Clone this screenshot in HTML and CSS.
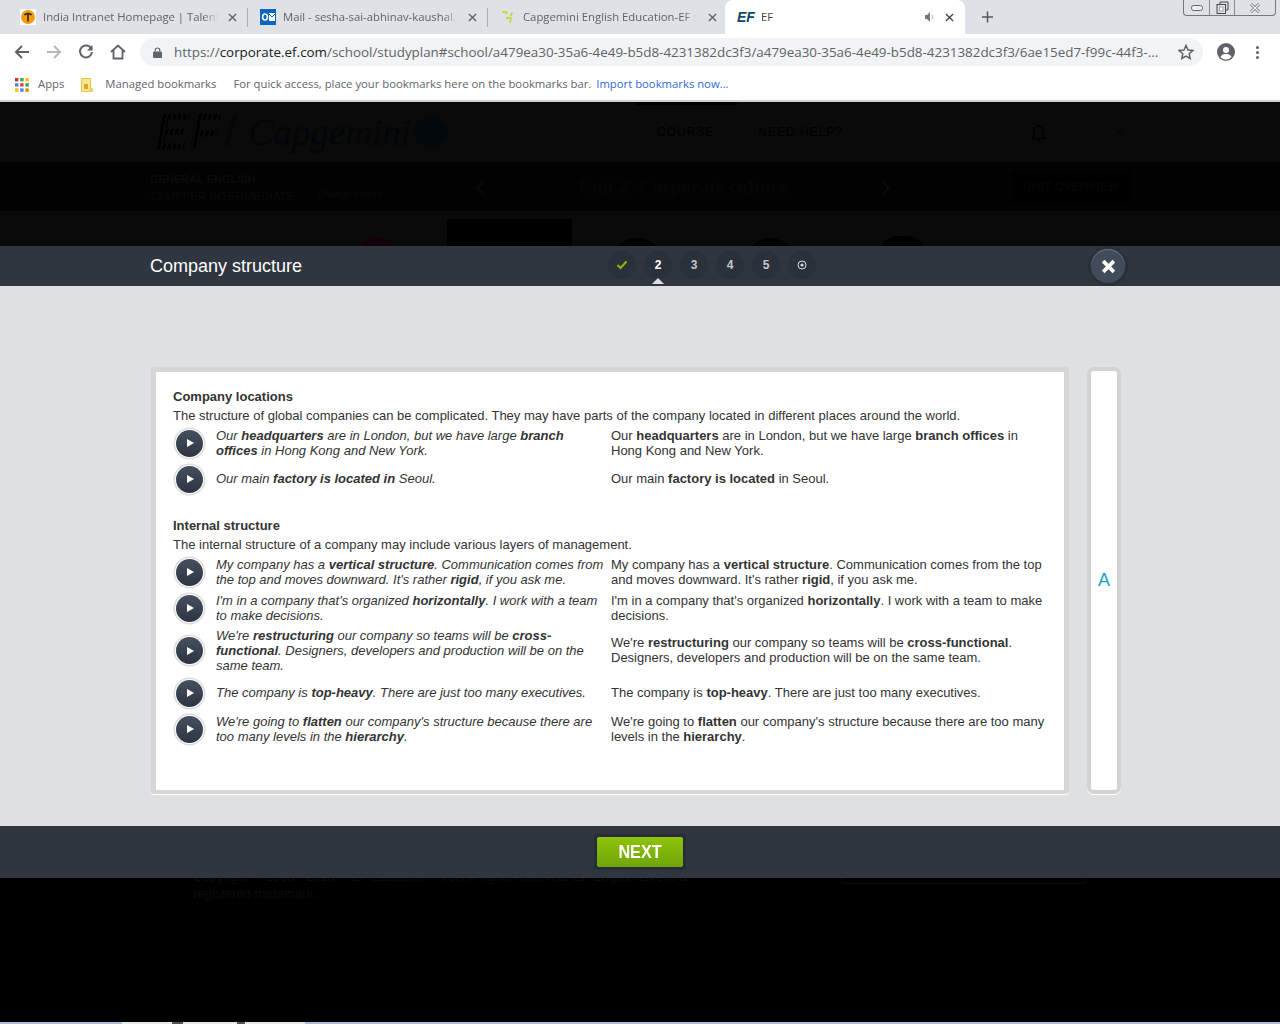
FILE: index.html

```html
<!DOCTYPE html>
<html lang="en">
<head>
    <meta charset="UTF-8">
    <title>EF</title>
    <link rel="stylesheet" href="styles.css">
</head>
<body>
    <div class="tabstrip">
        <div class="tab">
            <svg class="fav" viewBox="0 0 16 16"><rect width="16" height="16" fill="#fff"/><circle cx="8" cy="8" r="7" fill="#f59a0c"/><path d="M4.500 6a4 3 0 0 1 7 0M8 4v8.500" stroke="#222" stroke-width="1.500" fill="none"/></svg>
            <span class="tab-title">India Intranet Homepage | Talent</span>
            <svg class="tab-x" viewBox="0 0 10 10"><path d="M1 1l8 8M9 1l-8 8" stroke="#5f6368" stroke-width="1.500"/></svg>
        </div>
        <div class="tab tab-sep">
            <svg class="fav" viewBox="0 0 16 16"><rect y="0" width="16" height="16" fill="#0a64c0"/><rect x="9" y="4" width="6" height="8" fill="#fff"/><path d="M9 5l3 3 3-3" stroke="#0a64c0" fill="none"/><ellipse cx="5" cy="8" rx="2.400" ry="3" fill="none" stroke="#fff" stroke-width="1.600"/></svg>
            <span class="tab-title">Mail - sesha-sai-abhinav-kaushal.</span>
            <svg class="tab-x" viewBox="0 0 10 10"><path d="M1 1l8 8M9 1l-8 8" stroke="#5f6368" stroke-width="1.500"/></svg>
        </div>
        <div class="tab tab-sep">
            <svg class="fav" viewBox="0 0 16 16"><path d="M2 2h5l1 3H6L5 4H2zM13 3l-1 4h-2l1-4zM6 8h6l-1 6H9l1-4H6z" fill="#c9d84a"/></svg>
            <span class="tab-title">Capgemini English Education-EF :</span>
            <svg class="tab-x" viewBox="0 0 10 10"><path d="M1 1l8 8M9 1l-8 8" stroke="#5f6368" stroke-width="1.500"/></svg>
        </div>
        <div class="tab tab-active">
            <span class="ef-mark">EF</span>
            <span class="tab-title">EF</span>
            <svg class="tab-sound" viewBox="0 0 12 12"><path d="M1 4h2l3-3v10L3 8H1z" fill="#777"/><path d="M8 4a3 3 0 0 1 0 4" stroke="#aaa" fill="none"/></svg>
            <svg class="tab-x" viewBox="0 0 10 10"><path d="M1 1l8 8M9 1l-8 8" stroke="#444" stroke-width="1.500"/></svg>
        </div>
        <svg class="new-tab" viewBox="0 0 12 12"><path d="M6 0v12M0 6h12" stroke="#555" stroke-width="1.600"/></svg>
        <div class="win-btns">
            <div class="win-btn win-min"><svg viewBox="0 0 12 6"><rect x=".5" y=".5" width="11" height="5" rx="2" fill="#eee" stroke="#444" stroke-width=".8"/></svg></div>
            <div class="win-btn win-max"><svg viewBox="0 0 13 13"><path d="M4 3V1h8v8h-2" fill="none" stroke="#444"/><rect x="1" y="3.500" width="8.500" height="9" fill="none" stroke="#444"/><rect x="3.500" y="6" width="3.500" height="4" fill="#fff" stroke="#777" stroke-width=".6"/></svg></div>
            <div class="win-btn win-close"><svg viewBox="0 0 12 10"><path d="M2 1l8 8M10 1l-8 8" stroke="#666" stroke-width="2.800"/><path d="M2 1l8 8M10 1l-8 8" stroke="#f2f2f2" stroke-width="1.400"/></svg></div>
        </div>
    </div>

    <div class="toolbar">
        <svg class="nav-icon" viewBox="0 0 16 16"><path d="M15 8H2M8 2L2 8l6 6" stroke="#5f6368" stroke-width="2" fill="none"/></svg>
        <svg class="nav-icon" viewBox="0 0 16 16"><path d="M1 8h13M8 2l6 6-6 6" stroke="#b5b8bc" stroke-width="2" fill="none"/></svg>
        <svg class="nav-icon" viewBox="0 0 16 16"><path d="M13.500 5A6 6 0 1 0 14 8" stroke="#5f6368" stroke-width="2" fill="none"/><path d="M14.500 1v5.500H9z" fill="#5f6368"/></svg>
        <svg class="nav-icon" viewBox="0 0 16 16"><path d="M1 8l7-6.500L15 8M3.500 6.500V14.500h9V6.500" stroke="#5f6368" stroke-width="1.800" fill="none"/></svg>
        <div class="omnibox">
            <svg class="lock" viewBox="0 0 10 12"><rect y="5" width="10" height="7" rx="1" fill="#5f6368"/><path d="M2.500 5V3.500a2.500 2.500 0 0 1 5 0V5" stroke="#5f6368" stroke-width="1.300" fill="none"/></svg>
            <span class="url">https://<b>corporate.ef.com</b>/school/studyplan#school/a479ea30-35a6-4e49-b5d8-4231382dc3f3/a479ea30-35a6-4e49-b5d8-4231382dc3f3/6ae15ed7-f99c-44f3-...</span>
            <svg class="star" viewBox="0 0 16 16"><path d="M8 1.500l2 4.500 4.800.5-3.600 3.200 1 4.800L8 12.100l-4.200 2.400 1-4.800L1.200 6.500 6 6z" stroke="#5f6368" stroke-width="1.500" fill="none"/></svg>
        </div>
        <svg class="avatar" viewBox="0 0 18 18"><circle cx="9" cy="9" r="9" fill="#5f6368"/><circle cx="9" cy="7" r="3" fill="#fff"/><path d="M3.500 14c1-2.500 3.500-3 5.500-3s4.500.5 5.500 3a7 7 0 0 1-11 0z" fill="#fff"/></svg>
        <div class="menu-dots"><i></i><i></i><i></i></div>
    </div>

    <div class="bookmarks">
        <svg class="apps" viewBox="0 0 14 14">
            <rect width="3.400" height="3.400" fill="#d93025"/><rect x="5.200" width="3.400" height="3.400" fill="#34a853"/><rect x="10.400" width="3.400" height="3.400" fill="#fbbc04"/>
            <rect y="5.200" width="3.400" height="3.400" fill="#4285f4"/><rect x="5.200" y="5.200" width="3.400" height="3.400" fill="#ea4335"/><rect x="10.400" y="5.200" width="3.400" height="3.400" fill="#34a853"/>
            <rect y="10.400" width="3.400" height="3.400" fill="#fbbc04"/><rect x="5.200" y="10.400" width="3.400" height="3.400" fill="#4285f4"/><rect x="10.400" y="10.400" width="3.400" height="3.400" fill="#ea8600"/>
        </svg>
        <span class="bm-apps">Apps</span>
        <svg class="bm-folder" viewBox="0 0 12 14"><path d="M.5.500h9v13h-9z" fill="#fbe58f" stroke="#e6c34a"/><rect x="3" y="6" width="4" height="5" fill="#d9aa2a"/><rect x="8" y="10" width="4" height="4" fill="#f4cf63"/></svg>
        <span class="bm-managed">Managed bookmarks</span>
        <span class="bm-hint">For quick access, place your bookmarks here on the bookmarks bar.</span>
        <span class="bm-link">Import bookmarks now...</span>
    </div>

    <div class="page">
        <div class="dim-nav">
            <div class="dim-logo"><b>EF</b><span class="dim-slash">/</span><span class="dim-brand">Capgemini</span><i class="dim-spade"></i></div>
            <span class="dim-link">COURSE</span>
            <span class="dim-link">NEED HELP?</span>
            <svg class="dim-bell" viewBox="0 0 16 20"><path d="M1 16c2-2 2-4 2-8a5 5 0 0 1 10 0c0 4 0 6 2 8zM6 18h4" stroke="#000" stroke-width="1.500" fill="none"/></svg>
            <svg class="dim-caret" viewBox="0 0 10 6"><path d="M1 1l4 4 4-4" stroke="#000" fill="none"/></svg>
        </div>
        <div class="dim-course-bar">
            <div class="dim-course-name"><b>GENERAL ENGLISH</b><span>12-UPPER INTERMEDIATE</span></div>
            <span class="dim-change">Change course</span>
            <i class="dim-prev"></i>
            <span class="dim-unit">Unit 2&nbsp; Corporate culture</span>
            <i class="dim-next"></i>
            <span class="dim-overview">UNIT OVERVIEW</span>
        </div>
        <div class="dim-content">
            <i class="dim-circle dim-red"></i>
            <i class="dim-rect"></i>
            <i class="dim-circle dim-c2"></i>
            <i class="dim-circle dim-c3"></i>
            <i class="dim-spiky"></i>
        </div>
        <div class="dim-footer">
            <p>Copyright © 1963 - 2018 © EF Education First All rights reserved. EF English Live is a<br>registered trademark.</p>
            <div class="dim-box"></div>
        </div>
        <div class="taskbar"><i></i></div>

        <div class="modal">
            <div class="modal-head">
                <div class="modal-title">Company structure</div>
                <div class="steps">
                    <div class="step step-done"><svg viewBox="0 0 12 10"><path d="M1.500 5l3 3 6-6.500" stroke="#8ab80a" stroke-width="2.200" fill="none"/></svg></div>
                    <div class="step step-current">2</div>
                    <div class="step">3</div>
                    <div class="step">4</div>
                    <div class="step">5</div>
                    <div class="step"><svg viewBox="0 0 10 10"><circle cx="5" cy="5" r="4" stroke="#ddd" fill="none"/><circle cx="5" cy="5" r="1.600" fill="#ddd"/></svg></div>
                </div>
                <div class="close-btn"><svg viewBox="0 0 14 14"><path d="M2 2l10 10M12 2L2 12" stroke="#fff" stroke-width="3.400"/></svg></div>
            </div>

            <div class="modal-body">
                <div class="panel">
                    <h4>Company locations</h4>
                    <p class="intro">The structure of global companies can be complicated. They may have parts of the company located in different places around the world.</p>
                    <div class="row">
                        <div class="play"><i></i></div>
                        <div class="line-en">Our <b>headquarters</b> are in London, but we have large <b>branch offices</b> in Hong Kong and New York.</div>
                        <div class="line-tr">Our <b>headquarters</b> are in London, but we have large <b>branch offices</b> in Hong Kong and New York.</div>
                    </div>
                    <div class="row row-single">
                        <div class="play"><i></i></div>
                        <div class="line-en">Our main <b>factory is located in</b> Seoul.</div>
                        <div class="line-tr">Our main <b>factory is located</b> in Seoul.</div>
                    </div>

                    <h4 class="second">Internal structure</h4>
                    <p class="intro">The internal structure of a company may include various layers of management.</p>
                    <div class="row">
                        <div class="play"><i></i></div>
                        <div class="line-en">My company has a <b>vertical structure</b>. Communication comes from the top and moves downward. It's rather <b>rigid</b>, if you ask me.</div>
                        <div class="line-tr">My company has a <b>vertical structure</b>. Communication comes from the top and moves downward. It's rather <b>rigid</b>, if you ask me.</div>
                    </div>
                    <div class="row">
                        <div class="play"><i></i></div>
                        <div class="line-en">I'm in a company that's organized <b>horizontally</b>. I work with a team to make decisions.</div>
                        <div class="line-tr">I'm in a company that's organized <b>horizontally</b>. I work with a team to make decisions.</div>
                    </div>
                    <div class="row row-tall">
                        <div class="play"><i></i></div>
                        <div class="line-en">We're <b>restructuring</b> our company so teams will be <b>cross-functional</b>. Designers, developers and production will be on the same team.</div>
                        <div class="line-tr">We're <b>restructuring</b> our company so teams will be <b>cross-functional</b>. Designers, developers and production will be on the same team.</div>
                    </div>
                    <div class="row row-single">
                        <div class="play"><i></i></div>
                        <div class="line-en">The company is <b>top-heavy</b>. There are just too many executives.</div>
                        <div class="line-tr">The company is <b>top-heavy</b>. There are just too many executives.</div>
                    </div>
                    <div class="row">
                        <div class="play"><i></i></div>
                        <div class="line-en">We're going to <b>flatten</b> our company's structure because there are too many levels in the <b>hierarchy</b>.</div>
                        <div class="line-tr">We're going to <b>flatten</b> our company's structure because there are too many levels in the <b>hierarchy</b>.</div>
                    </div>
                </div>
                <div class="side-panel"><span>A</span></div>
            </div>

            <div class="modal-foot">
                <div class="next-wrap"><div class="next-btn"><span>NEXT</span></div></div>
            </div>
        </div>
    </div>
</body>
</html>
```

FILE: styles.css

```css
html, body {
    margin: 0;
    padding: 0;
    height: 1024px;
    overflow: hidden;
    background: #000;
    font-family: "Liberation Sans", Arial, sans-serif;
}

/* browser chrome */
.tabstrip {
    height: 34px;
    background: #dee1e6;
    display: flex;
    position: relative;
    font-family: "Open Sans", sans-serif;
    font-size: 11.300px;
    color: #5f6368;
    padding-left: 8px;
}

.tab {
    width: 240px;
    height: 34px;
    display: flex;
    align-items: center;
    padding: 0 11px 0 12px;
    box-sizing: border-box;
    flex: none;
    position: relative;
}

.tab-sep::before {
    content: "";
    position: absolute;
    left: -1px;
    top: 8px;
    height: 19px;
    width: 1px;
    background: #a9acb0;
}

.tab-active {
    margin-left: -3px;
    background: #fff;
    border-radius: 8px 8px 0 0;
    color: #444;
}

.fav {
    width: 16px;
    height: 16px;
    flex: none;
    margin-right: 7px;
}

.tab-title {
    flex: 1;
    white-space: nowrap;
    overflow: hidden;
    line-height: 15px;
    padding-bottom: 1px;
    -webkit-mask-image: linear-gradient(to left, transparent, #000 14px);
    mask-image: linear-gradient(to left, transparent, #000 14px);
}

.tab-x {
    width: 9px;
    height: 9px;
    flex: none;
    margin-left: 10px;
}

.tab-sound {
    width: 12px;
    height: 12px;
    margin-right: -1px;
}

.ef-mark {
    font: italic bold 14px "Liberation Sans", sans-serif;
    color: #0e4a6b;
    width: 24px;
    flex: none;
}

.new-tab {
    width: 11px;
    height: 12px;
    margin: 11px 0 0 17px;
}

.win-btns {
    position: absolute;
    top: 0;
    right: 4px;
    width: 93px;
    height: 16px;
    display: flex;
    border: 1px solid #777;
    border-top: 0;
    border-radius: 0 0 4px 4px;
    box-sizing: border-box;
}

.win-btn {
    display: flex;
    align-items: center;
    justify-content: center;
}

.win-min { width: 25px; border-right: 1px solid #8a8a8a; }
.win-max { width: 24px; border-right: 1px solid #8a8a8a; }
.win-close { flex: 1; }
.win-min svg { width: 12px; height: 6px; }
.win-max svg { width: 13px; height: 13px; }
.win-close svg { width: 12px; height: 10px; }

.toolbar {
    height: 36px;
    background: #fff;
    display: flex;
    align-items: center;
    padding-left: 14px;
    gap: 16px;
}

.nav-icon {
    width: 16px;
    height: 16px;
    flex: none;
}

.omnibox {
    width: 1063px;
    height: 28px;
    margin-left: -2px;
    border-radius: 14px;
    background: #f1f3f4;
    display: flex;
    align-items: center;
    padding-left: 13px;
    box-sizing: border-box;
    font-family: "Open Sans", sans-serif;
    font-size: 13.400px;
    color: #5f6368;
    flex: none;
}

.lock {
    width: 9px;
    height: 11px;
    flex: none;
    margin-right: 12px;
}

.url {
    white-space: nowrap;
    width: 995px;
    overflow: hidden;
    flex: none;
}

.url b {
    font-weight: 400;
    color: #202124;
}

.star {
    width: 16px;
    height: 16px;
    margin-left: 9px;
    flex: none;
}

.avatar {
    width: 18px;
    height: 18px;
    margin-left: -2px;
    flex: none;
}

.menu-dots {
    display: flex;
    flex-direction: column;
    gap: 2px;
    margin-left: 5px;
}

.menu-dots i {
    width: 3px;
    height: 3px;
    border-radius: 50%;
    background: #5f6368;
}

.bookmarks {
    height: 30px;
    background: #fff;
    border-bottom: 2px solid #d0d0d0;
    display: flex;
    align-items: center;
    font-family: "Open Sans", sans-serif;
    font-size: 11.300px;
    color: #5f6368;
    padding-left: 15px;
}

.bookmarks span { padding-bottom: 4px; }
.apps { width: 14px; height: 14px; }
.bm-apps { margin-left: 9px; }
.bm-folder { width: 12px; height: 14px; margin-left: 17px; }
.bm-managed { margin-left: 12px; }
.bm-hint { margin-left: 17px; }
.bm-link { margin-left: 5px; color: #3367d6; }

/* dimmed page behind the activity */
.page {
    position: relative;
    height: 922px;
    background: #000;
}

.dim-nav {
    height: 60px;
    background: #0a0a0a;
    display: flex;
    align-items: center;
    padding-left: 155px;
    position: relative;
}

/* active nav marker along the top edge */
.dim-nav::before {
    content: "";
    position: absolute;
    left: 636px;
    top: 0;
    width: 101px;
    height: 3px;
    background: #000;
}

.dim-logo {
    width: 502px;
    display: flex;
    align-items: center;
    color: #020608;
}

.dim-logo b {
    font: italic bold 50px "Liberation Sans", sans-serif;
    letter-spacing: 1px;
    color: transparent;
    background: repeating-linear-gradient(100deg, #000 0 3px, #0a0a0a 3px 5px);
    -webkit-background-clip: text;
    background-clip: text;
}

.dim-slash {
    font-size: 42px;
    margin: 0 12px 0 4px;
    font-weight: 100;
}

.dim-brand {
    font: italic 37px "Liberation Serif", serif;
}

.dim-spade {
    width: 34px;
    height: 32px;
    background: #02080c;
    border-radius: 50%;
    margin-left: 3px;
}

.dim-link {
    color: #000;
    font-size: 12px;
    letter-spacing: 1px;
    margin-right: 44px;
}

.dim-bell {
    width: 15px;
    height: 19px;
    margin-left: 144px;
}

.dim-caret {
    width: 9px;
    height: 6px;
    margin-left: 70px;
}

.dim-course-bar {
    height: 49px;
    background: #020202;
    display: flex;
    align-items: center;
    position: relative;
    padding-left: 150px;
    color: #000;
}

.dim-course-name {
    display: flex;
    flex-direction: column;
    width: 168px;
    padding-top: 2px;
    font-size: 11px;
    line-height: 17px;
    color: #0a0a0a;
}

.dim-course-name span { font-size: 11.500px; }

.dim-change {
    font-size: 9.500px;
    margin-top: 14px;
    color: #0a0a0a;
}

.dim-prev, .dim-next {
    position: absolute;
    top: 20px;
    width: 9px;
    height: 9px;
    border-left: 2px solid #0a0a0a;
    border-bottom: 2px solid #0a0a0a;
}

.dim-prev { left: 478px; transform: rotate(45deg); }
.dim-next { left: 877px; transform: rotate(225deg); }

.dim-unit {
    position: absolute;
    left: 578px;
    font: bold 19.300px "Liberation Serif", serif;
    color: #060606;
}

.dim-overview {
    position: absolute;
    left: 1011px;
    width: 120px;
    height: 32px;
    text-align: center;
    background: #000;
    font: bold 12px/32px "Liberation Sans", sans-serif;
    color: #060606;
}

.dim-content {
    height: 651px;
    background: #0a0a0a;
    display: flex;
    align-items: flex-start;
    padding-left: 353px;
    box-sizing: border-box;
}

.dim-circle {
    width: 55px;
    height: 55px;
    border-radius: 50%;
    background: #000;
    margin-top: 27px;
    flex: none;
}

.dim-red { width: 50px; height: 50px; background: #14000a; }

.dim-rect {
    width: 125px;
    height: 60px;
    background: #000;
    margin: 8px 38px 0 44px;
    flex: none;
}

.dim-c3 { width: 51px; height: 51px; margin-left: 80px; }

.dim-spiky {
    width: 47px;
    height: 46px;
    margin: 25px 0 0 83px;
    background: #000;
    border-radius: 40%;
    flex: none;
}

.dim-footer {
    height: 160px;
    background: #000;
    box-sizing: border-box;
    padding-left: 193px;
    display: flex;
    align-items: flex-start;
}

.dim-footer p {
    margin: 0;
    padding-top: 6px;
    width: 648px;
    flex: none;
    white-space: nowrap;
    font-size: 13px;
    line-height: 17px;
    color: #0c0c0c;
}

.dim-box {
    width: 243px;
    height: 20px;
    border: 1px solid #0d0d0d;
    border-radius: 4px;
}

.taskbar {
    height: 2px;
    background: #a9bdd6;
    padding-left: 122px;
}

.taskbar i {
    display: block;
    width: 183px;
    height: 2px;
    background: linear-gradient(to right, #e6e8ea 50px, #555 50px 61px, #e6e8ea 61px 115px, #555 115px 123px, #e6e8ea 123px);
}

/* activity overlay */
.modal {
    position: absolute;
    left: 0;
    right: 0;
    top: 144px;
    height: 632px;
    display: flex;
    flex-direction: column;
}

.modal-head {
    height: 40px;
    background: #2f3640;
    position: relative;
    flex: none;
}

.modal-title {
    position: absolute;
    left: 150px;
    top: 9px;
    font-size: 18px;
    line-height: 22px;
    color: #fff;
}

.steps {
    position: absolute;
    left: 608px;
    top: 5px;
    display: flex;
    gap: 8px;
}

.step {
    width: 28px;
    height: 28px;
    border-radius: 50%;
    background: #2a313b;
    color: #c5c8cc;
    font-size: 12px;
    font-weight: bold;
    display: flex;
    align-items: center;
    justify-content: center;
}

.step svg { width: 10px; height: 10px; }
.step-done svg { width: 12px; }
.step-current { color: #fff; position: relative; }

.step-current::after {
    content: "";
    position: absolute;
    left: 8px;
    bottom: -5px;
    border: 6px solid transparent;
    border-top: 0;
    border-bottom-color: #dfe0e2;
}

.close-btn {
    position: absolute;
    left: 1091px;
    top: 3px;
    width: 34px;
    height: 34px;
    border-radius: 50%;
    background: #414b59;
    box-shadow: 0 0 0 3px #2a313b, inset 0 1px 1px #6a7482;
    display: flex;
    align-items: center;
    justify-content: center;
}

.close-btn svg { width: 15px; height: 15px; }

.modal-body {
    flex: 1;
    background: #dfe0e2;
    display: flex;
    padding: 81px 0 0 151px;
    gap: 18px;
    align-items: flex-start;
}

.panel {
    width: 918px;
    height: 427px;
    box-sizing: border-box;
    border: 5px solid #d6d6d6;
    border-bottom-width: 4px;
    border-radius: 3px;
    background: #fff;
    box-shadow: 0 1px 0 #fff;
    padding: 15px 17px 0;
    font-size: 13px;
    line-height: 15px;
    color: #333;
}

.panel h4 {
    margin: 0;
    font-size: 13px;
    line-height: 19px;
    font-weight: bold;
    color: #333;
}

.panel h4.second { margin-top: 19px; }

.intro {
    margin: 0;
    line-height: 19px;
}

.row {
    display: grid;
    grid-template-columns: 43px 395px 437px;
    height: 36px;
    align-items: center;
}

.row-tall { height: 49px; }
.row-single .line-en, .row-single .line-tr, .row-tall .line-tr { padding-bottom: 2px; }

.play {
    width: 27px;
    height: 27px;
    border-radius: 50%;
    background: linear-gradient(#454f5e, #2d3541);
    box-shadow: 0 0 0 1px #fff, 0 0 0 2.500px #dcdcdc;
    margin-left: 3px;
    display: flex;
    align-items: center;
    justify-content: center;
}

.play i {
    border-left: 7px solid #fff;
    border-top: 4.500px solid transparent;
    border-bottom: 4.500px solid transparent;
    margin-left: 2px;
}

.line-en { font-style: italic; padding-right: 6px; }

.side-panel {
    width: 34px;
    height: 427px;
    box-sizing: border-box;
    border: 4px solid #d3d3d3;
    border-radius: 7px;
    background: #fff;
    box-shadow: 0 1px 0 #fff;
    display: flex;
    align-items: center;
    justify-content: center;
    color: #1b9fc6;
    font-size: 18px;
}

.modal-foot {
    height: 52px;
    background: #2f3640;
    display: flex;
    align-items: center;
    justify-content: center;
    flex: none;
}

.next-wrap {
    background: #282e38;
    padding: 3px;
    border-radius: 4px;
}

.next-btn {
    width: 86px;
    height: 30px;
    line-height: 30px;
    text-align: center;
    border-radius: 2px;
    background: linear-gradient(#8fc20a, #6ea50a);
    color: #fff;
    font-size: 18px;
    font-weight: bold;
}

/* the original label is a condensed face, none is installed */
.next-btn span {
    display: inline-block;
    transform: scaleX(0.9);
}
```
